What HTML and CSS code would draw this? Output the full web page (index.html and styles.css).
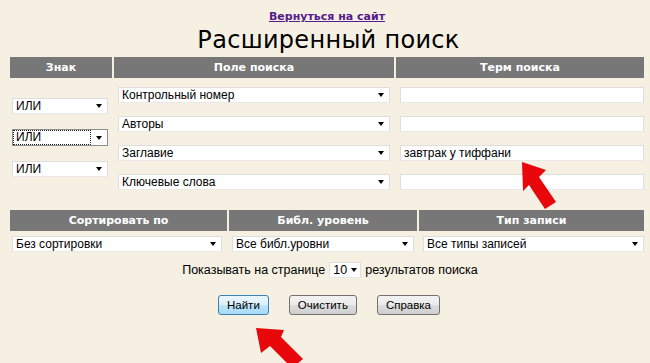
FILE: index.html
```html
<!DOCTYPE html>
<html lang="ru">
<head>
    <meta charset="UTF-8">
    <title>Расширенный поиск</title>
    <link rel="stylesheet" href="styles.css">
</head>
<body>
<div class="page">
    <a class="back" href="#">Вернуться на сайт</a>
    <h1>Расширенный поиск</h1>

    <div class="search">
        <div class="head">Знак</div>
        <div class="head">Поле поиска</div>
        <div class="head">Терм поиска</div>

        <div class="ops">
            <div class="select"><span class="value">ИЛИ</span><span class="caret"></span></div>
            <div class="select focus"><span class="value">ИЛИ</span><span class="caret"></span></div>
            <div class="select"><span class="value">ИЛИ</span><span class="caret"></span></div>
        </div>
        <div class="fields">
            <div class="select"><span class="value">Контрольный номер</span><span class="caret"></span></div>
            <div class="select"><span class="value">Авторы</span><span class="caret"></span></div>
            <div class="select"><span class="value">Заглавие</span><span class="caret"></span></div>
            <div class="select"><span class="value">Ключевые слова</span><span class="caret"></span></div>
        </div>
        <div class="terms">
            <div class="input"></div>
            <div class="input"></div>
            <div class="input">завтрак у тиффани</div>
            <div class="input"></div>
        </div>
    </div>

    <div class="limits">
        <div class="head">Сортировать по</div>
        <div class="head">Библ. уровень</div>
        <div class="head">Тип записи</div>
        <div class="select sort"><span class="value">Без сортировки</span><span class="caret"></span></div>
        <div class="select level"><span class="value">Все библ.уровни</span><span class="caret"></span></div>
        <div class="select type"><span class="value">Все типы записей</span><span class="caret"></span></div>
    </div>

    <div class="per-page">
        Показывать на странице
        <div class="select count"><span class="value">10</span><span class="caret"></span></div>
        результатов поиска
    </div>

    <div class="buttons">
        <button class="btn primary">Найти</button>
        <button class="btn">Очистить</button>
        <button class="btn">Справка</button>
    </div>

    <svg class="arrows" width="650" height="363" viewBox="0 0 650 363">
        <!-- arrow to the search term -->
        <polygon points="522,152 523,181 529,175 545,199 556,192 539,167 546,160"/>
        <!-- arrow to the search button -->
        <polygon points="256,318 261,343 270,336 292,358 303,349 281,327 284,320"/>
    </svg>
</div>
</body>
</html>
```

FILE: styles.css
```css
body {
    margin: 0;
    background: #f6f0e3;
    font-family: "Liberation Sans", Arial, sans-serif;
    font-size: 12px;
    color: #000;
}

.page {
    position: relative;
    width: 634px;
    height: 363px;
    padding: 0 6px 0 10px;
}

.back {
    display: block;
    margin-top: 10px;
    height: 14px;
    line-height: 14px;
    text-align: center;
    font-family: "DejaVu Sans", Verdana, sans-serif;
    font-size: 11px;
    font-weight: bold;
    color: #551a8b;
}

h1 {
    margin: 0;
    height: 33px;
    line-height: 33px;
    text-align: center;
    font-family: "DejaVu Sans", Verdana, sans-serif;
    font-size: 24px;
    font-weight: normal;
    letter-spacing: 0.3px;
    padding-left: 3px;
}

.head {
    height: 21px;
    line-height: 21px;
    background: #777777;
    color: #fff;
    text-align: center;
    font-family: "DejaVu Sans", Verdana, sans-serif;
    font-size: 11px;
    font-weight: bold;
}

.search {
    display: grid;
    grid-template-columns: 102px 280px 248px;
    column-gap: 2px;
    align-items: start;
}

.ops {
    display: flex;
    flex-direction: column;
    gap: 15px;
    padding: 20px 4px 0 2px;
}

.fields {
    display: flex;
    flex-direction: column;
    gap: 13px;
    padding: 9px 4px 0 4px;
}

.terms {
    display: flex;
    flex-direction: column;
    gap: 13px;
    padding: 9px 0 0 4px;
}

.select,
.input {
    display: flex;
    align-items: center;
    box-sizing: border-box;
    height: 16px;
    background: #fff;
    border: 1px solid #dedede;
    border-bottom-color: #e9e9e9;
    padding-left: 3px;
    white-space: nowrap;
}

.select .value {
    flex: 1;
}

.caret {
    width: 0;
    height: 0;
    margin: 0 5px 0 4px;
    border-left: 3.5px solid transparent;
    border-right: 3.5px solid transparent;
    border-top: 4px solid #000;
}

.select.focus {
    height: 17px;
    border-color: #8d8d8d;
    padding: 1px;
}

.select.focus .value {
    align-self: stretch;
    line-height: 13px;
    padding-left: 2px;
    outline: 1px dotted #222;
}

.select.focus .caret {
    margin: 0 4px 0 6px;
}

.limits {
    display: grid;
    grid-template-columns: 217px 188px 225px;
    column-gap: 2px;
    row-gap: 5px;
    margin-top: 20px;
}

.select.sort {
    margin: 0 5px 0 2px;
}

.select.level {
    margin: 0 3px 0 3px;
}

.select.type {
    margin-left: 4px;
}

.per-page {
    display: flex;
    justify-content: center;
    align-items: center;
    gap: 4px;
    margin-top: 10px;
    padding-left: 6px;
    font-size: 12.5px;
}

.select.count {
    height: 16px;
    padding-left: 3px;
}

.select.count .caret {
    margin: 0 3px 0 4px;
}

.buttons {
    display: flex;
    justify-content: center;
    gap: 20px;
    margin-top: 17px;
    padding-left: 4px;
}

.btn {
    height: 20px;
    padding: 0 8px;
    border: 1px solid #707070;
    border-radius: 3px;
    background: linear-gradient(#f2f2f2, #ebebeb 50%, #dddddd 50%, #cfcfcf);
    font-family: "Liberation Sans", Arial, sans-serif;
    font-size: 11.5px;
    color: #000;
}

.btn.primary {
    border-color: #3c7fb1;
    background: linear-gradient(#eaf6fd, #d9f0fc 50%, #bee6fd 50%, #a7d9f5);
}

.arrows {
    position: absolute;
    left: 0;
    top: 0;
    pointer-events: none;
}

.arrows polygon {
    fill: #e8070b;
}
```
